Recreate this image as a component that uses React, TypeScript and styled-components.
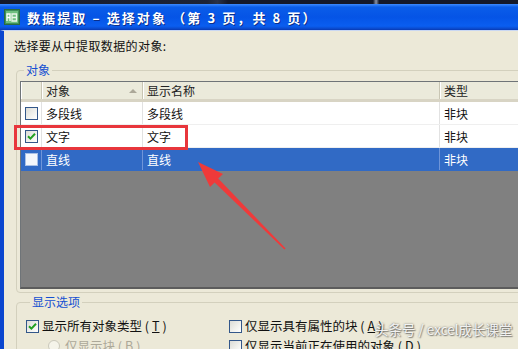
import React from 'react';
import styled, { createGlobalStyle } from 'styled-components';

const GlobalStyle = createGlobalStyle`
  html, body {
    margin: 0;
    padding: 0;
    width: 518px;
    height: 349px;
    overflow: hidden;
    background: #ece9d8;
  }
  body {
    font-family: "Noto Sans CJK SC", "Noto Sans", sans-serif;
  }
`;

const Window = styled.div`
  position: relative;
  width: 518px;
  height: 349px;
  overflow: hidden;
  display: flex;
  flex-direction: column;
  background: #ece9d8;
`;

const TopStrip = styled.div`
  flex-shrink: 0;
  height: 4px;
  background: linear-gradient(to right, #14192a 0%, #1d2437 40%, #2a3247 42%, #14192a 44%, #14192a 72%, #8a94a8 72.6%, #14192a 73.2%);
`;

const TitleBar = styled.div`
  flex-shrink: 0;
  height: 26px;
  box-sizing: border-box;
  display: flex;
  align-items: center;
  gap: 7px;
  padding-left: 4px;
  background: linear-gradient(to bottom, #3d8bff 0%, #0a5de9 12%, #0554e6 50%, #0a5ef0 85%, #0a47c8 96%, #0838b0 100%);
  color: #fff;
  font-size: 13px;
  font-weight: bold;
  letter-spacing: 2.1px;
  white-space: nowrap;
  text-shadow: 1px 1px 0 #0a2f8c;
`;

const Body = styled.div`
  flex: 1;
  display: flex;
  flex-direction: column;
  border-left: 4px solid #0a46cf;
  border-top: 1px solid #c9d7f2;
  padding: 7px 0 0 10px;
`;

const Prompt = styled.div`
  font-size: 12px;
  line-height: 16px;
  color: #111;
  letter-spacing: 0.4px;
`;

const Group = styled.fieldset<{ $top: number; $padLeft: number }>`
  margin: ${p => p.$top}px -80px 0 2px;
  padding: 0 0 3px ${p => p.$padLeft}px;
  border: 1px solid #d3d0bd;
  border-radius: 4px;
  min-width: 0;
`;

const Legend = styled.legend`
  margin-left: 4px;
  padding: 0 2px;
  font-size: 12px;
  line-height: 14px;
  color: #1450d2;
`;

const ListView = styled.div`
  margin-top: 4px;
  height: 208px;
  box-sizing: border-box;
  display: flex;
  flex-direction: column;
  background: #808080;
  border: 1px solid #6f7478;
  border-right: none;
  border-bottom: 2px solid #5c5c5c;
`;

const columns = '21px 101px 297px 1fr';

const Header = styled.div`
  display: grid;
  grid-template-columns: ${columns};
  height: 20px;
  box-sizing: border-box;
  background: #ebeadb;
  border-bottom: 3px solid #d8d4c4;
`;

const HeaderCell = styled.div`
  position: relative;
  font-size: 12px;
  line-height: 17px;
  padding-left: 4px;
  color: #222;
  border-right: 1px solid #c9c6b4;
  box-shadow: inset 1px 0 0 #fff;
`;

const SortArrow = styled.span`
  position: absolute;
  right: 5px;
  top: 7px;
  width: 0;
  height: 0;
  border-left: 4px solid transparent;
  border-right: 4px solid transparent;
  border-bottom: 4px solid #aca899;
`;

const Row = styled.div<{ $selected?: boolean }>`
  display: grid;
  grid-template-columns: ${columns};
  height: 23px;
  box-sizing: border-box;
  border-bottom: 1px solid ${p => (p.$selected ? '#316ac5' : '#efefef')};
  background: ${p => (p.$selected ? '#316ac5' : '#fff')};
  color: ${p => (p.$selected ? '#fff' : '#111')};
`;

const Cell = styled.div<{ $selected?: boolean; $center?: boolean }>`
  display: flex;
  align-items: center;
  justify-content: ${p => (p.$center ? 'center' : 'flex-start')};
  padding-left: ${p => (p.$center ? 0 : 4)}px;
  font-size: 12px;
  border-right: 1px solid ${p => (p.$selected ? '#6f95d8' : '#e2e2e2')};
`;

const Box = styled.span<{ $light?: boolean }>`
  flex-shrink: 0;
  display: inline-flex;
  align-items: center;
  justify-content: center;
  width: 13px;
  height: 13px;
  box-sizing: border-box;
  border: 1px solid ${p => (p.$light ? '#a9c0e6' : '#33578a')};
  background: ${p => (p.$light ? '#f4f7fc' : 'linear-gradient(135deg, #dcdcd6 0%, #f2f2ee 60%, #fff 100%)')};
`;

const Options = styled.div`
  display: grid;
  grid-template-columns: 203px 1fr;
  row-gap: 4px;
  margin-top: 9px;
`;

const Option = styled.div<{ $disabled?: boolean; $indent?: number }>`
  display: flex;
  align-items: center;
  gap: 3px;
  padding-left: ${p => p.$indent || 0}px;
  font-size: 12.5px;
  line-height: 16px;
  white-space: nowrap;
  color: ${p => (p.$disabled ? '#aca899' : '#111')};
`;

const Radio = styled.span`
  width: 12px;
  height: 12px;
  box-sizing: border-box;
  border-radius: 50%;
  border: 1px solid #cac8bb;
  background: #f5f4ea;
  margin-right: 2px;
`;

const Highlight = styled.div`
  position: absolute;
  left: 14px;
  top: 125px;
  width: 174px;
  height: 25px;
  box-sizing: border-box;
  border: 3px solid #e8363c;
  pointer-events: none;
`;

const Overlay = styled.svg`
  position: absolute;
  left: 0;
  top: 0;
  pointer-events: none;
`;

const Watermark = styled.div`
  position: absolute;
  left: 375px;
  top: 319px;
  font-size: 13.5px;
  line-height: 20px;
  color: rgba(255, 255, 255, 0.9);
  text-shadow: 0 0 2px rgba(60, 60, 60, 0.7), 1px 1px 1px rgba(60, 60, 60, 0.5);
  white-space: nowrap;
`;

const Check = () => (
  <svg width="9" height="9" viewBox="0 0 9 9">
    <path d="M1 4.2 L3.4 6.6 L8 1.8" fill="none" stroke="#21a121" strokeWidth="2" />
  </svg>
);

const Checkbox: React.FC<{ checked?: boolean; light?: boolean }> = ({ checked, light }) => (
  <Box $light={light}>{checked && <Check />}</Box>
);

const AppIcon = () => (
  <svg width="16" height="16" viewBox="0 0 16 16">
    <rect x="0.5" y="0.5" width="15" height="15" fill="#3f8f5a" stroke="#2a6a40" />
    <rect x="2" y="2" width="12" height="12" fill="#6fbf7f" />
    <path d="M3 12 L3 5 L6 5 L6 12 M3 8.5 L6 8.5" fill="none" stroke="#fff" strokeWidth="1.3" />
    <path d="M8 5 L12.5 5 L12.5 12 L8 12 Z M8 8.5 L12.5 8.5" fill="none" stroke="#e9f5ea" strokeWidth="1.3" />
  </svg>
);

const rows = [
  { name: '多段线', display: '多段线', type: '非块', checked: false },
  { name: '文字', display: '文字', type: '非块', checked: true },
  { name: '直线', display: '直线', type: '非块', checked: false, selected: true },
];

export default function App() {
  return (
    <Window>
      <GlobalStyle />
      <TopStrip />
      <TitleBar>
        <AppIcon />
        <span>数据提取 – 选择对象 （第 3 页，共 8 页）</span>
      </TitleBar>
      <Body>
        <Prompt>选择要从中提取数据的对象:</Prompt>
        <Group $top={9} $padLeft={3}>
          <Legend>对象</Legend>
          <ListView>
            <Header>
              <HeaderCell />
              <HeaderCell>
                对象
                <SortArrow />
              </HeaderCell>
              <HeaderCell>显示名称</HeaderCell>
              <HeaderCell>类型</HeaderCell>
            </Header>
            {rows.map(r => (
              <Row key={r.name} $selected={r.selected}>
                <Cell $center $selected={r.selected}>
                  <Checkbox checked={r.checked} light={r.selected} />
                </Cell>
                <Cell $selected={r.selected}>{r.name}</Cell>
                <Cell $selected={r.selected}>{r.display}</Cell>
                <Cell $selected={r.selected}>{r.type}</Cell>
              </Row>
            ))}
          </ListView>
        </Group>
        <Group $top={2} $padLeft={9}>
          <Legend>显示选项</Legend>
          <Options>
            <Option>
              <Checkbox checked />
              显示所有对象类型 (<u>T</u>)
            </Option>
            <Option>
              <Checkbox />
              仅显示具有属性的块 (<u>A</u>)
            </Option>
            <Option $disabled $indent={22}>
              <Radio />
              仅显示块 (<u>B</u>)
            </Option>
            <Option>
              <Checkbox />
              仅显示当前正在使用的对象 (<u>D</u>)
            </Option>
          </Options>
        </Group>
      </Body>
      <Highlight />
      <Overlay width="518" height="349" viewBox="0 0 518 349">
        <polygon
          points="198,162 223,174 218.2,178.6 285.6,248.6 284.4,249.4 214.6,182.4 210,187"
          fill="#ef3a3a"
        />
      </Overlay>
      <Watermark>头条号 / excel成长课堂</Watermark>
    </Window>
  );
}
